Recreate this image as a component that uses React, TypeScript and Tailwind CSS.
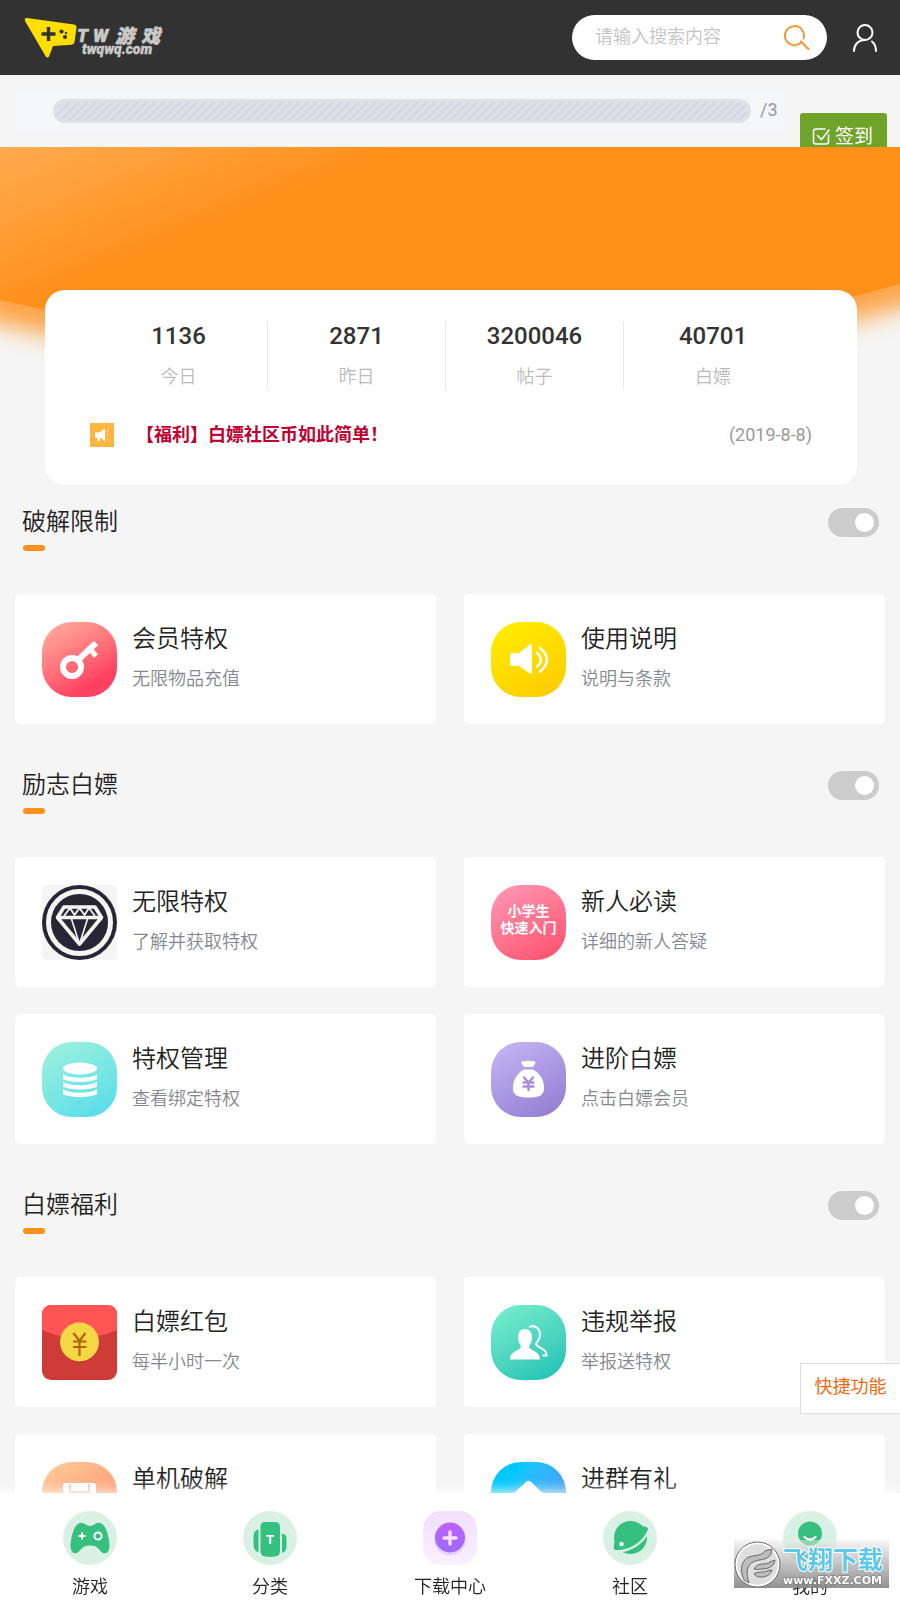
import type { ReactNode } from "react";

const PAGE_FONT = "font-['Roboto','Noto_Sans_CJK_SC',sans-serif]";

/* ---------- card icons, drawn on a 75 x 75 grid ---------- */

function Glyph({ children }: { children: ReactNode }) {
  return (
    <svg viewBox="0 0 75 75" className="h-full w-full" aria-hidden="true">
      {children}
    </svg>
  );
}

function KeyIcon() {
  return (
    <Glyph>
      <g fill="none" stroke="#fff" strokeWidth="6">
        <circle cx="30" cy="45" r="9" />
        <path d="M36 38 54 21" />
        <path d="M48 27l6 7" strokeWidth="5" />
      </g>
    </Glyph>
  );
}

function SpeakerIcon() {
  return (
    <Glyph>
      <path
        d="M21 31h7l11-8.500q2-1 2 1v27q0 2-2 1L28 44h-7q-2 0-2-2v-9q0-2 2-2z"
        fill="#fff"
      />
      <g fill="none" stroke="#fff" strokeWidth="2.600" strokeLinecap="round">
        <path d="M46 31q8 6.500 0 13.500" />
        <path d="M49 26q14 11.500 0 23.500" />
      </g>
    </Glyph>
  );
}

function DiamondIcon() {
  return (
    <Glyph>
      <circle cx="37.500" cy="37.500" r="37.500" fill="#292634" />
      <circle cx="37.500" cy="37.500" r="31" fill="none" stroke="#f5f5f5" strokeWidth="5" />
      <g fill="none" stroke="#f5f5f5" strokeLinejoin="round">
        <path d="M22 22h31l6.500 10.500-22 26.500-22-26.500z" strokeWidth="3.600" />
        <path d="M16 32.500h43" strokeWidth="3.600" />
        <path d="M22 31l6-8 4.500 7 5-7 5 7 4.500-7 6 8" strokeWidth="1.800" />
        <path d="M29.500 34l8 25 8-25" strokeWidth="1.600" />
      </g>
    </Glyph>
  );
}

function DatabaseIcon() {
  const band = "M21 32c6 5 28 5 34 0v5c-6 4-28 4-34 0z";
  return (
    <Glyph>
      <g fill="#fff">
        <ellipse cx="38" cy="26.500" rx="17" ry="6" />
        <path d={band} />
        <path d={band} transform="translate(0 7.500)" />
        <path d={band} transform="translate(0 15)" />
      </g>
    </Glyph>
  );
}

function MoneyBagIcon() {
  return (
    <Glyph>
      <g fill="#fff">
        <path d="M31 19.500q6.500-1.500 13 0 1 .5.300 1.500L42 25h-9l-2.700-4q-.7-1 .7-1.500z" />
        <path d="M33 27.500h9C50 32 53 39 53 46c0 7-4 9.500-15.500 9.500S22 53 22 46c0-7 3-14 11-18.500z" />
      </g>
      <path
        d="M33 35.500l4.500 5 4.500-5M37.500 40.500V48M32.500 40.500h10M32.500 44.500h10"
        fill="none"
        stroke="#a58fdd"
        strokeWidth="2.400"
        strokeLinecap="round"
      />
    </Glyph>
  );
}

function RedPacketIcon() {
  return (
    <Glyph>
      <path d="M0 0h75v25Q37.500 41 0 25z" fill="#ff5555" />
      <circle cx="37.500" cy="38" r="19.500" fill="#b5302c" />
      <circle cx="37.500" cy="37" r="19.500" fill="#f5d746" />
      <path
        d="M31.500 28l6 8 6-8M37.500 36v15M31 36.500h13.500M31 42h13.500"
        fill="none"
        stroke="#b06508"
        strokeWidth="2.200"
      />
    </Glyph>
  );
}

function PeopleIcon() {
  return (
    <Glyph>
      <path
        d="M38 22c6-2 11 1 11 8 0 5-3 6-4 9 1 4 11 4 10.500 11.500h-4"
        fill="none"
        stroke="#fff"
        strokeWidth="2"
      />
      <path
        d="M34 24c5 0 7 3.500 7 9 0 4-2 6-3 8.500 0 4 11 4 11 13H19c0-9 11-9 11-13-1-2.500-3-4.500-3-8.500 0-5.500 2-9 7-9z"
        fill="#fff"
      />
    </Glyph>
  );
}

function DiskIcon() {
  return (
    <Glyph>
      <path d="M24 21h27q3 0 3 3v30H21V24q0-3 3-3z" fill="#fff" />
      <path d="M28 22v8h19v-8" fill="none" stroke="#ffb088" strokeWidth="1.500" />
      <path d="M27 54V40h21v14" fill="none" stroke="#ffb088" strokeWidth="1.500" />
    </Glyph>
  );
}

function JoinIcon() {
  return (
    <Glyph>
      <path d="M35.500 19.500q2-1.500 4 0L55 34v18q0 3-3 3H23q-3 0-3-3V34z" fill="#fff" />
    </Glyph>
  );
}

function StarterIcon() {
  return (
    <span className="flex h-full flex-col items-center pt-[18px] text-sm leading-[17px] font-bold text-white">
      <span>小学生</span>
      <span>快速入门</span>
    </span>
  );
}

/* ---------- page data ---------- */

type Feature = { title: string; note: string; tile: string; icon: ReactNode };

const sections: { title: string; items: Feature[] }[] = [
  {
    title: "破解限制",
    items: [
      {
        title: "会员特权",
        note: "无限物品充值",
        tile: "rounded-[30px] bg-linear-150 from-[#ffa498] from-10% to-[#ff4264] to-75%",
        icon: <KeyIcon />,
      },
      {
        title: "使用说明",
        note: "说明与条款",
        tile: "rounded-[30px] bg-linear-150 from-[#fff000] to-[#ffc800]",
        icon: <SpeakerIcon />,
      },
    ],
  },
  {
    title: "励志白嫖",
    items: [
      { title: "无限特权", note: "了解并获取特权", tile: "rounded-[5px] bg-[#f5f5f5]", icon: <DiamondIcon /> },
      {
        title: "新人必读",
        note: "详细的新人答疑",
        tile: "rounded-[30px] bg-linear-150 from-[#ff98b8] to-[#ff4a68]",
        icon: <StarterIcon />,
      },
      {
        title: "特权管理",
        note: "查看绑定特权",
        tile: "rounded-[30px] bg-linear-150 from-[#9ff2dc] to-[#50dbea]",
        icon: <DatabaseIcon />,
      },
      {
        title: "进阶白嫖",
        note: "点击白嫖会员",
        tile: "rounded-[30px] bg-linear-150 from-[#c6b9f6] to-[#9079d0]",
        icon: <MoneyBagIcon />,
      },
    ],
  },
  {
    title: "白嫖福利",
    items: [
      { title: "白嫖红包", note: "每半小时一次", tile: "rounded-[9px] bg-[#cf3b36]", icon: <RedPacketIcon /> },
      {
        title: "违规举报",
        note: "举报送特权",
        tile: "rounded-[30px] bg-linear-150 from-[#78f0cc] to-[#12bfb4]",
        icon: <PeopleIcon />,
      },
      {
        title: "单机破解",
        note: "破解单机游戏",
        tile: "rounded-[30px] bg-linear-150 from-[#ffcf9c] to-[#ff7a5c]",
        icon: <DiskIcon />,
      },
      {
        title: "进群有礼",
        note: "加群领取礼包",
        tile: "rounded-[30px] bg-linear-120 from-[#00c8ff] from-25% to-[#4a90f0]",
        icon: <JoinIcon />,
      },
    ],
  },
];

const stats = [
  { value: "1136", label: "今日" },
  { value: "2871", label: "昨日" },
  { value: "3200046", label: "帖子" },
  { value: "40701", label: "白嫖" },
];

/* ---------- header ---------- */

function Logo() {
  return (
    <a href="#home" aria-label="TW游戏 twqwq.com" className="block">
      <svg viewBox="0 0 140 42" className="h-[42px] w-[140px]">
        <path
          d="M3 1 50 7.500q3 .5 2.500 3.500L50.500 25q-.4 2.500-3 2.700L29 29l-4 10.500q-1.500 2-3.200 0L1 4Q0 1 3 1z"
          fill="#ffde00"
        />
        <path d="M24.500 10v14M17.500 17h14" stroke="#323232" strokeWidth="3.400" />
        <g fill="#323232">
          <circle cx="37.500" cy="14.500" r="2.100" />
          <circle cx="42" cy="16" r="1.200" />
          <circle cx="41" cy="20" r="2.100" />
        </g>
        <g
          fill="#c9c9c9"
          stroke="#c9c9c9"
          strokeWidth=".6"
          fontFamily="Roboto, 'Noto Sans CJK SC', sans-serif"
          fontWeight="900"
          fontStyle="italic"
        >
          <text x="53" y="25" fontSize="18">T</text>
          <text x="69" y="25" fontSize="18">W</text>
          <text x="91" y="26" fontSize="19">游</text>
          <text x="117" y="26" fontSize="19">戏</text>
          <text x="58" y="37" fontSize="14" strokeWidth=".4">twqwq.com</text>
        </g>
      </svg>
    </a>
  );
}

function Header() {
  return (
    <header className="flex h-[75px] items-center justify-between bg-[#323232] pr-[22px] pl-6">
      <Logo />
      <div className="flex items-center gap-6">
        <form className="flex h-[45px] w-[255px] items-center rounded-full bg-white pr-4 pl-[23px]">
          <input
            type="search"
            aria-label="搜索"
            placeholder="请输入搜索内容"
            className="min-w-0 flex-1 pb-0.5 text-lg font-[350] text-[#333] outline-none placeholder:text-[#c4c4c4]"
          />
          <button type="button" aria-label="搜索">
            <svg viewBox="0 0 28 28" className="h-7 w-7" fill="none" stroke="#f19a3e" strokeWidth="2" strokeLinecap="round">
              <path d="M18 18.500a9.500 9.500 0 1 1 2.500-4" />
              <path d="M18 17.500l7.500 7.500" strokeWidth="2.200" />
            </svg>
          </button>
        </form>
        <a href="#me" aria-label="个人中心">
          <svg viewBox="0 0 27 30" className="h-[30px] w-[27px]" fill="none" stroke="#fff" strokeWidth="2" strokeLinecap="round">
            <circle cx="14" cy="9.500" r="7.500" />
            <path d="M3 28c0-6 4-11 11-11M21 18.500c3 2.500 4 6 4 9.500" />
          </svg>
        </a>
      </div>
    </header>
  );
}

function SignInBar() {
  return (
    <section className="flex h-[72px] items-start overflow-hidden pr-[13px] pl-4">
      <div className="mt-4 flex h-10 flex-1 items-center gap-[9px] bg-[#f5f6fa] pl-[37px]">
        <div
          role="progressbar"
          aria-label="签到进度"
          className="h-6 flex-1 rounded-full border-3 border-[#e0e1e4] bg-[repeating-linear-gradient(135deg,#dee1ea_0_2px,#d6d9e4_3px_5px,#dee1ea_6px)]"
        />
        <span className="w-[25px] pb-0.5 text-lg text-[#999]">/3</span>
      </div>
      <button
        type="button"
        className="mt-[38px] ml-[15px] flex h-[46px] w-[87px] shrink-0 items-center justify-center gap-1 rounded-[3px] bg-[#70a329] pr-0.5 text-[19px] text-white"
      >
        <svg viewBox="0 0 19 19" className="h-[19px] w-[19px]" fill="none" stroke="#fff" strokeWidth="1.600" strokeLinecap="round">
          <path d="M13 2H4Q1.500 2 1.500 4.500v10Q1.500 17 4 17h10q2.500 0 2.500-2.500V8" />
          <path d="M5.500 8.500l4 4L17 3" />
        </svg>
        <span className="pt-0.5">签到</span>
      </button>
    </section>
  );
}

/* ---------- banner with the figures card ---------- */

function BannerCurve() {
  return (
    <svg
      viewBox="0 0 900 230"
      preserveAspectRatio="none"
      className="absolute inset-x-0 top-0 h-[230px] w-full"
      aria-hidden="true"
    >
      <defs>
        <linearGradient id="banner" gradientUnits="userSpaceOnUse" x1="0" y1="0" x2="60" y2="145">
          <stop offset="0" stopColor="#ffab50" />
          <stop offset="1" stopColor="#ff901a" />
        </linearGradient>
        <filter id="glow" x="-10%" y="-10%" width="120%" height="140%">
          <feGaussianBlur stdDeviation="12" />
        </filter>
      </defs>
      <path
        d="M-60-30H960V120L900 137Q470 260 0 153L-60 139Z"
        transform="translate(0 24)"
        fill="#ff901a"
        opacity=".8"
        filter="url(#glow)"
      />
      <path d="M0 0H900V137Q470 260 0 153Z" fill="url(#banner)" />
    </svg>
  );
}

function Banner() {
  return (
    <section className="relative px-[45px] pt-[143px]">
      <BannerCurve />
      <div className="relative -mr-0.5 rounded-[20px] bg-white px-[45px] pt-[31px] pb-[37px]">
        <dl className="grid grid-cols-4 pr-[10px]">
          {stats.map((s) => (
            <div
              key={s.label}
              className="flex h-[69px] flex-col-reverse items-center justify-between border-r border-[#eaeaea] last:border-r-0"
            >
              <dt className="text-lg leading-[26px] font-[350] text-[#bbb]">{s.label}</dt>
              <dd className="text-2xl leading-[30px] font-medium text-[#333]">{s.value}</dd>
            </div>
          ))}
        </dl>
        <div className="mt-[32px] flex h-[26px] items-center">
          <span className="h-6 w-6 bg-[#ffb540]">
            <svg viewBox="0 0 24 24" aria-hidden="true">
              <path d="M5 9.500h4l6-4v13l-5-4v3.500H7.500L7 14.500H5z" fill="#fff" />
              <path d="M16.500 8.500l2-2M17 12h2M16.500 15.500l2 2" stroke="#ffe3b5" strokeWidth="1" />
            </svg>
          </span>
          <a href="#notice" className="ml-[22px] flex-1 text-lg leading-[26px] font-bold text-[#c00030]">
            【福利】白嫖社区币如此简单！
          </a>
          <time dateTime="2019-08-08" className="text-lg leading-[26px] text-[#999]">
            (2019-8-8)
          </time>
        </div>
      </div>
    </section>
  );
}

/* ---------- feature sections ---------- */

function FeatureCard({ item }: { item: Feature }) {
  return (
    <a href="#feature" className="flex h-[130px] items-center gap-[15px] rounded-[5px] bg-white px-[27px]">
      <span className={`h-[75px] w-[75px] shrink-0 overflow-hidden ${item.tile}`}>{item.icon}</span>
      <span className="flex flex-col gap-2">
        <span className="text-2xl leading-8 font-[350] text-[#222]">{item.title}</span>
        <span className="text-lg leading-8 font-[350] text-[#85888e]">{item.note}</span>
      </span>
    </a>
  );
}

function FeatureSection({ title, items }: { title: string; items: Feature[] }) {
  return (
    <section className="px-[15px] pt-[21px]">
      <div className="flex h-[88px] items-start justify-between pr-[6px] pl-[7px]">
        <h2 className="text-2xl leading-8 font-[350] text-[#222] after:mt-[7px] after:ml-px after:block after:h-1.5 after:w-[22px] after:rounded-full after:bg-[#ff901a]">
          {title}
        </h2>
        <input
          type="checkbox"
          role="switch"
          aria-label={title}
          className="relative mt-0.5 h-[29px] w-[51px] appearance-none rounded-full bg-[#ccc] before:absolute before:top-[5px] before:right-[5px] before:h-[19px] before:w-[19px] before:rounded-full before:bg-white"
        />
      </div>
      <div className="grid grid-cols-2 gap-x-7 gap-y-[27px]">
        {items.map((item) => (
          <FeatureCard key={item.title} item={item} />
        ))}
      </div>
    </section>
  );
}

/* ---------- bottom navigation ---------- */

function NavIcon({ children }: { children: ReactNode }) {
  return (
    <svg viewBox="0 0 54 54" className="h-[54px] w-[54px]" aria-hidden="true">
      {children}
    </svg>
  );
}

const navItems: { label: string; icon: ReactNode }[] = [
  {
    label: "游戏",
    icon: (
      <NavIcon>
        <circle cx="27" cy="27" r="27" fill="#d9f1e5" />
        <path
          d="M17 12c4-1 6 3 10 3s6-4 10-3c6 1 9 14 9.500 22 .3 8-4.500 10-8 7-3-3-4-6.500-11.500-6.500S18.500 38 15.500 41c-3.500 3-8.300 1-8-7 .5-8 3.500-21 9.500-22z"
          fill="#35c07f"
        />
        <path d="M19 21.500v7M15.500 25h7" stroke="#fff" strokeWidth="2" />
        <circle cx="35" cy="25" r="3.600" fill="none" stroke="#fff" strokeWidth="2" />
      </NavIcon>
    ),
  },
  {
    label: "分类",
    icon: (
      <NavIcon>
        <circle cx="27" cy="27" r="27" fill="#d9f1e5" />
        <g fill="#35c07f">
          <path d="M22 11h10q5 0 5 5v24q0 5-5 5.500-5 .5-10 0-4.500-.5-4.500-5.500V16q0-5 4.500-5z" />
          <path d="M15.500 18.500v23q-5-2-5-8v-8q0-6 5-7z" />
          <path d="M39 22.500q4.500 1 4.500 5v8q0 5-4.500 6.500z" />
        </g>
        <text x="27" y="33" textAnchor="middle" fontFamily="Roboto, sans-serif" fontSize="13" fontWeight="900" fill="#fff">
          T
        </text>
      </NavIcon>
    ),
  },
  {
    label: "下载中心",
    icon: (
      <NavIcon>
        <defs>
          <linearGradient id="add" x1="0" y1="0" x2="0" y2="1">
            <stop offset="0" stopColor="#bf62f8" />
            <stop offset="1" stopColor="#9a6bff" />
          </linearGradient>
          <linearGradient id="addTile" x1="0" y1="0" x2="0" y2="1">
            <stop offset="0" stopColor="#f2dffe" />
            <stop offset="1" stopColor="#faf0ff" />
          </linearGradient>
        </defs>
        <rect width="54" height="54" rx="18" fill="url(#addTile)" />
        <circle cx="27" cy="28.500" r="16" fill="#d9c2ff" opacity=".6" />
        <circle cx="27" cy="26.500" r="15" fill="url(#add)" />
        <path d="M27 21v12M21 27h12" stroke="#fbe0ff" strokeWidth="3.400" strokeLinecap="round" />
      </NavIcon>
    ),
  },
  {
    label: "社区",
    icon: (
      <NavIcon>
        <circle cx="27" cy="27" r="27" fill="#d9f1e5" />
        <circle cx="27.500" cy="26.500" r="16.500" fill="#35c07f" />
        <path d="M36 15q8 0 9 2.500c.5 4-8 13-16 17-8 4.500-15 6-17.500 4-1.500-2-.5-6 1-10z" fill="#35c07f" />
        <path d="M13 40q11 1 21.500-6.500Q42 28 45.500 20" fill="none" stroke="#d9f1e5" strokeWidth="2.200" />
        <circle cx="18.500" cy="33" r="2.200" fill="#fff" />
      </NavIcon>
    ),
  },
  {
    label: "我的",
    icon: (
      <NavIcon>
        <circle cx="27" cy="27" r="27" fill="#d9f1e5" />
        <circle cx="27" cy="22.500" r="12" fill="#35c07f" />
        <path d="M21.500 26q5.500 5.500 11 0" fill="none" stroke="#fff" strokeWidth="2.200" strokeLinecap="round" />
        <path d="M18 41q3-3 7 0l2 3 2-3q4-3 7 0-2 6-9 6t-9-6z" fill="#35c07f" />
      </NavIcon>
    ),
  },
];

function BottomNav() {
  return (
    <nav className="fixed inset-x-0 bottom-0 z-10 grid h-[107px] grid-cols-5 bg-white shadow-[0_-2px_12px_rgba(255,255,255,0.9)]">
      {navItems.map((item) => (
        <a key={item.label} href="#nav" className="flex flex-col items-center gap-[9px] pt-[18px] text-[#222]">
          {item.icon}
          <span className="text-lg leading-[26px] font-[350]">{item.label}</span>
        </a>
      ))}
    </nav>
  );
}

function SiteStamp() {
  return (
    <div className="fixed right-[11px] bottom-3 z-20 h-12 w-[155px] bg-linear-to-b from-[#eeeeee]/50 to-[#858585]/90">
      <svg viewBox="0 0 155 48" role="img" aria-label="飞翔下载 www.fxxz.com">
        <circle cx="23.500" cy="24.500" r="22.500" fill="#dedede" stroke="#6e6e6e" />
        <circle cx="23.500" cy="24.500" r="21" fill="none" stroke="#fff" strokeWidth="1.500" />
        <g fill="#bdbdbd" stroke="#666" strokeWidth="1" strokeLinejoin="round">
          <path d="M10 40C5 29 8 20 15 17c7-2 12-1 16-6l7-2-1 5c-4 7-13 5-18 8-7 4-7 12-4 21z" />
          <path d="M20 29c5-8 12-3 16-7l5-2c-1 8-9 9-13 9-4 0-5 1-8 0z" />
          <path d="M20 34c4-3 9-1 13-3l5-1c-2 6-7 7-11 7-3 0-4 0-7-3z" />
        </g>
        <text
          x="49"
          y="29"
          fontFamily="'Noto Sans CJK SC', sans-serif"
          fontSize="25"
          fontWeight="700"
          fill="#5ec8ea"
          stroke="#fff"
          strokeWidth="2"
          paintOrder="stroke"
        >
          飞翔下载
        </text>
        <text
          x="49"
          y="44"
          fontFamily="'DejaVu Sans', sans-serif"
          fontSize="11"
          fontWeight="700"
          fill="#fff"
          stroke="#777"
          strokeWidth="1"
          paintOrder="stroke"
        >
          www.FXXZ.COM
        </text>
      </svg>
    </div>
  );
}

export default function App() {
  return (
    <div className={`min-h-screen bg-[#f5f5f5] pb-9 ${PAGE_FONT}`} lang="zh-CN">
      <Header />
      <SignInBar />
      <main>
        <Banner />
        <div className="flex flex-col gap-6">
          {sections.map((section) => (
            <FeatureSection key={section.title} title={section.title} items={section.items} />
          ))}
        </div>
      </main>
      <button
        type="button"
        className="fixed right-0 bottom-[186px] z-10 h-[51px] w-[100px] border border-r-0 border-[#ddd] bg-white pb-1 text-lg text-[#ee6a0c]"
      >
        快捷功能
      </button>
      <BottomNav />
      <SiteStamp />
    </div>
  );
}
